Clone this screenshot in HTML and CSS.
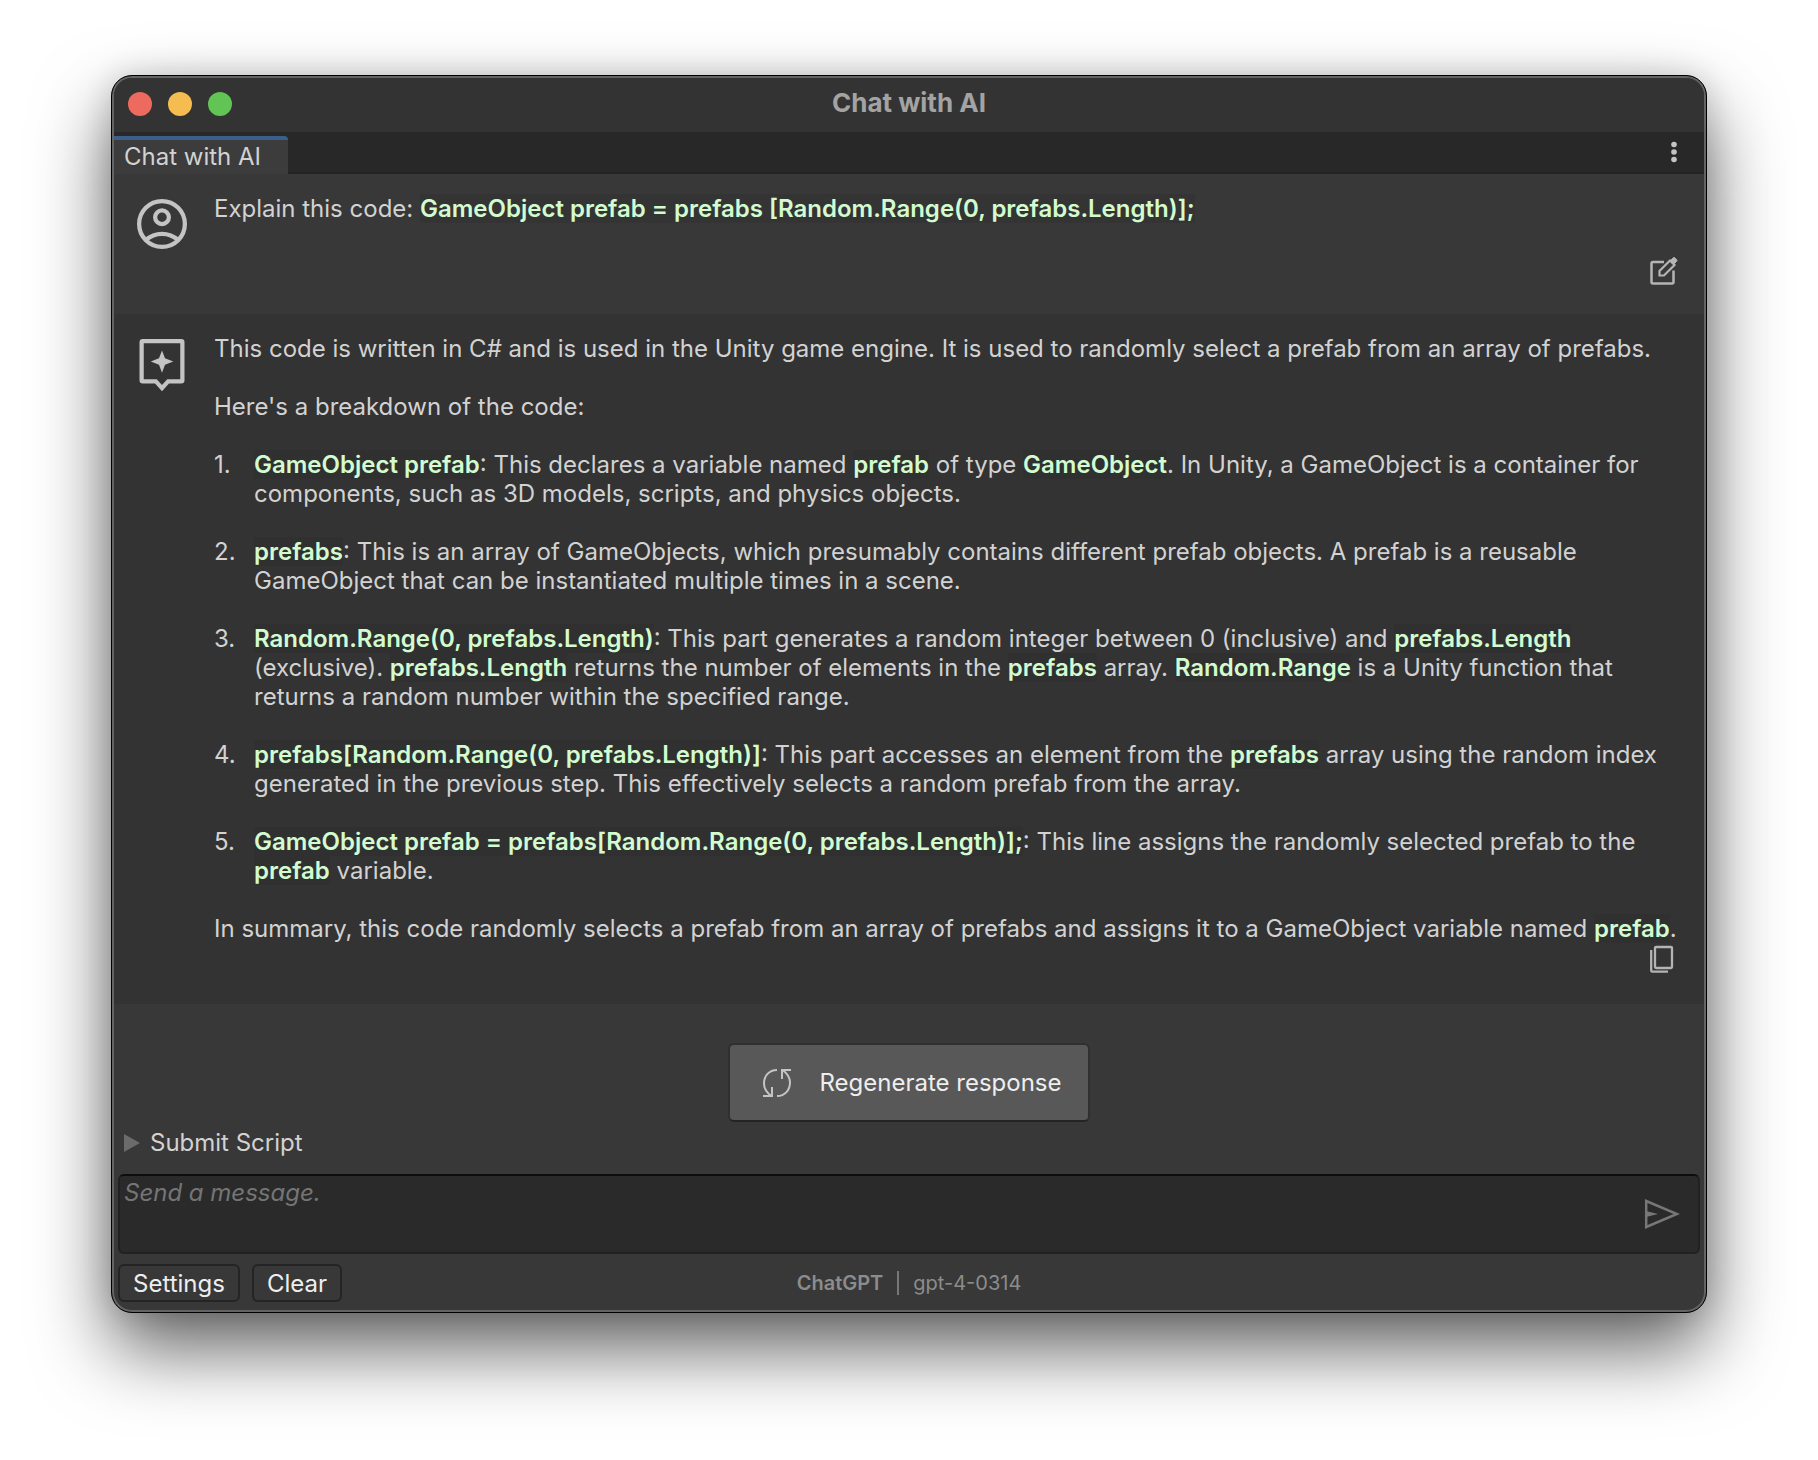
FILE: index.html
```html
<!DOCTYPE html>
<html lang="en">
<head>
<meta charset="utf-8">
<title>Chat with AI</title>
<link rel="stylesheet" href="styles.css">
</head>
<body>
<main class="window">
  <header class="titlebar">
    <div class="lights"><span class="light close"></span><span class="light minimize"></span><span class="light zoom"></span></div>
    <h1 class="title">Chat with AI</h1>
  </header>
  <nav class="tabbar">
    <a class="tab" href="#chat">Chat with AI</a>
    <button class="icon-button menu" type="button" aria-label="Menu">
      <svg width="8" height="22" viewBox="0 0 8 22" fill="#c4c4c4"><circle cx="4" cy="3.5" r="2.8"/><circle cx="4" cy="11" r="2.8"/><circle cx="4" cy="18.5" r="2.8"/></svg>
    </button>
  </nav>

  <section class="message user" id="chat">
    <svg class="avatar" viewBox="0 0 24 24" fill="none" stroke="#c4c4c4" stroke-width="1.7"><circle cx="12" cy="12" r="9.15"/><circle cx="12" cy="9.3" r="2.75"/><path d="M5.6 18.4C7.3 16.8 9.5 15.9 12 15.9s4.700.9 6.400 2.500"/></svg>
    <div class="text">
      <p>Explain this code: <code>GameObject prefab = prefabs [Random.Range(0, prefabs.Length)];</code></p>
    </div>
    <button class="icon-button action" type="button" aria-label="Edit message">
      <svg width="28" height="30" viewBox="0 0 28 30" fill="none" stroke="#b4b4b4" stroke-width="2.500"><path d="M14 6H3Q1.500 6 1.500 7.500v18.500q0 1.500 1.500 1.500h19q1.500 0 1.500-1.500V14.500"/><path d="M9.500 19.500v-4.500L20 4.500l4.500 4.500L14 19.500z" stroke-width="2.200"/><path d="M20 5l3-3q1-1 2 0l1.500 1.500q1 1 0 2l-3 3z" fill="#b4b4b4" stroke-width="1"/></svg>
    </button>
  </section>

  <section class="message assistant">
    <svg class="avatar" viewBox="0 0 24 24" fill="#c4c4c4"><path fill-rule="evenodd" d="M19.700 2H4.300A1.300 1.300 0 0 0 3 3.300v15.200a1.300 1.300 0 0 0 1.300 1.300h4.900L12 22.900l2.800-3.100h4.900a1.300 1.300 0 0 0 1.300-1.300V3.300A1.300 1.300 0 0 0 19.700 2zm-.4 16.100h-5.200L12 20.400l-2.100-2.300H4.700V3.700h14.600z"/><path d="M12 15.500l1.200-3.200 3.300-1.300-3.300-1.300L12 6.600l-1.200 3.100L7.500 11l3.300 1.300z"/></svg>
    <div class="text">
      <p>This code is written in C# and is used in the Unity game engine. It is used to randomly select a prefab from an array of prefabs.</p>
      <p>Here's a breakdown of the code:</p>
      <ol class="steps">
        <li><span>1.</span><p><code>GameObject prefab</code>: This declares a variable named <code>prefab</code> of type <code>GameObject</code>. In Unity, a GameObject is a container for components, such as 3D models, scripts, and physics objects.</p></li>
        <li><span>2.</span><p><code>prefabs</code>: This is an array of GameObjects, which presumably contains different prefab objects. A prefab is a reusable GameObject that can be instantiated multiple times in a scene.</p></li>
        <li><span>3.</span><p><code>Random.Range(0, prefabs.Length)</code>: This part generates a random integer between 0 (inclusive) and <code>prefabs.Length</code> (exclusive). <code>prefabs.Length</code> returns the number of elements in the <code>prefabs</code> array. <code>Random.Range</code> is a Unity function that returns a random number within the specified range.</p></li>
        <li><span>4.</span><p><code>prefabs[Random.Range(0, prefabs.Length)]</code>: This part accesses an element from the <code>prefabs</code> array using the random index generated in the previous step. This effectively selects a random prefab from the array.</p></li>
        <li><span>5.</span><p><code>GameObject prefab = prefabs[Random.Range(0, prefabs.Length)];</code>: This line assigns the randomly selected prefab to the <code>prefab</code> variable.</p></li>
      </ol>
      <p>In summary, this code randomly selects a prefab from an array of prefabs and assigns it to a GameObject variable named <code>prefab</code>.</p>
    </div>
    <button class="icon-button action" type="button" aria-label="Copy response">
      <svg width="28" height="30" viewBox="0 0 28 30" fill="none" stroke="#b4b4b4" stroke-width="2.300"><rect x="5" y="4" width="17" height="21" rx="1"/><path d="M1.200 7v20.500q0 1.200 1.200 1.200h15.600"/></svg>
    </button>
  </section>

  <section class="composer">
    <button class="regenerate" type="button">
      <svg width="30" height="30" viewBox="0 0 30 30" fill="none" stroke="#c4c4c4" stroke-width="2"><path d="M15 2C7 2 2 8 2 15.500c0 5 2.500 9 7.500 12.500M1 28h9v-9"/><path d="M15 28c8 0 13-6 13-13.500 0-5-2.500-9-7.500-12.500M29 2h-9v9"/></svg>
      <span>Regenerate response</span>
    </button>
    <details class="script">
      <summary><svg width="16" height="18" viewBox="0 0 16 18" fill="#6b6b6b"><path d="M0 0l16 9-16 9z"/></svg><span>Submit Script</span></summary>
    </details>
    <div class="field">
      <textarea class="input" placeholder="Send a message." aria-label="Message"></textarea>
      <button class="icon-button send" type="button" aria-label="Send">
        <svg width="36" height="32" viewBox="0 0 36 32" fill="none" stroke="#777" stroke-width="2.500"><path d="M2.200 3L33 16 2.200 29z"/><path d="M2 13l12 3-12 3z" fill="#777" stroke="none"/></svg>
      </button>
    </div>
    <footer class="footer">
      <div class="buttons"><button class="button" type="button">Settings</button><button class="button" type="button">Clear</button></div>
      <div class="model"><strong>ChatGPT</strong><span class="divider"></span><span>gpt-4-0314</span></div>
    </footer>
  </section>
</main>
</body>
</html>
```
FILE: styles.css
```css
* { box-sizing: border-box; }

body {
  margin: 0;
  padding: 75px 111px 147px;
  background: #fff;
  color: #d2d2d2;
  font: 24px/29px Inter, "Liberation Sans", sans-serif;
  font-optical-sizing: none;
}

p, h1, ol { margin: 0; padding: 0; }

button, textarea {
  margin: 0;
  font: inherit;
  color: inherit;
}

svg { display: block; flex: none; }

.window {
  border: 1px solid #000;
  border-radius: 21px;
  background: #383838;
  box-shadow: inset 0 0 0 2px #646464, 0 36px 76px rgba(0, 0, 0, .62), 0 0 30px rgba(0, 0, 0, .14);
  padding: 2px;
}

.titlebar {
  display: grid;
  grid-template-columns: 1fr auto 1fr;
  align-items: center;
  height: 54px;
  padding: 0 14px 2px;
  border-radius: 18px 18px 0 0;
  background: #333;
}

.lights { display: flex; gap: 16px; }
.light { width: 24px; height: 24px; border-radius: 50%; }
.close { background: #ed6a5f; }
.minimize { background: #f5bd4f; }
.zoom { background: #61c454; }

.title {
  padding-bottom: 2px;
  color: #a3a3a3;
  font-size: 26px;
  line-height: 32px;
  font-weight: 700;
}

.tabbar {
  display: flex;
  justify-content: space-between;
  align-items: flex-end;
  height: 42px;
  background: #282828;
  box-shadow: inset 0 -2px #232323;
}

.tab {
  width: 174px;
  height: 38px;
  padding: 2px 10px;
  border-top: 4px solid #3a5f8a;
  border-radius: 0 4px 0 0;
  background: #3c3c3c;
  color: #d2d2d2;
  text-decoration: none;
}

.icon-button {
  padding: 0;
  border: 0;
  background: none;
  cursor: pointer;
}

.menu { margin: 0 26px 11px; }

.message {
  display: grid;
  grid-template-columns: 60px 1fr;
  column-gap: 22px;
  padding: 20px 26px 28px 18px;
}

.avatar { width: 60px; height: 60px; grid-row: span 2; }
.assistant { padding-bottom: 31px; background: #333; }

.text {
  display: grid;
  gap: 29px;
}

.action { justify-self: end; }
.user .action { margin-top: 33px; }

code {
  font: inherit;
  font-weight: 600;
  color: #d3fbd0;
  background: #343434;
}

.assistant code { background: #303030; }

.steps {
  display: grid;
  gap: 29px;
  list-style: none;
}

.steps li {
  display: grid;
  grid-template-columns: 40px 1fr;
}

.composer {
  display: flex;
  flex-direction: column;
  padding: 39px 4px 8px;
}

.regenerate {
  display: flex;
  align-items: center;
  align-self: center;
  gap: 27px;
  height: 79px;
  padding: 0 26px 0 32px;
  border: 2px solid #303030;
  border-bottom-color: #242424;
  border-radius: 6px;
  background: #585858;
  color: #eee;
}

.script { margin: 6px 0 17px; }

.script summary {
  display: flex;
  align-items: center;
  gap: 10px;
  padding-left: 6px;
  list-style: none;
}

.field {
  display: flex;
  align-items: center;
  height: 80px;
  padding-right: 18px;
  border: 2px solid #212121;
  border-top-color: #0d0d0d;
  border-radius: 6px;
  background: #2a2a2a;
}

.input {
  flex: 1;
  align-self: stretch;
  padding: 2px 4px;
  border: 0;
  outline: 0;
  resize: none;
  background: none;
}

.input::placeholder { color: #757575; font-style: italic; }

.footer {
  display: grid;
  grid-template-columns: 1fr auto 1fr;
  align-items: center;
  margin-top: 10px;
}

.buttons { display: flex; gap: 12px; }

.button {
  height: 38px;
  padding: 0 13px;
  border: 2px solid #242424;
  border-radius: 6px;
  background: #383838;
  color: #eee;
}

.model {
  display: flex;
  align-items: center;
  gap: 14px;
  color: #8c8c8c;
  font-size: 20px;
  line-height: 24px;
}

.model strong { font-weight: 600; }
.divider { width: 2px; height: 24px; background: #777; }
```
